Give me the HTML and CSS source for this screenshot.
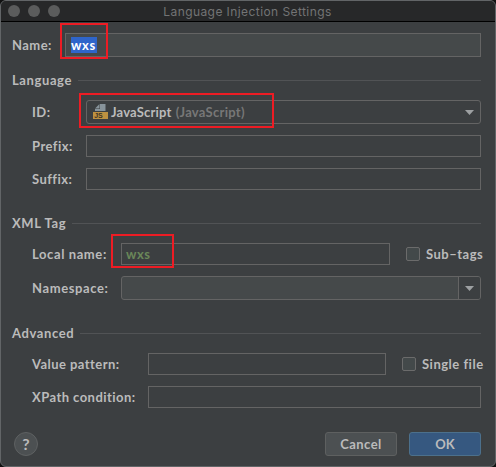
FILE: index.html
```html
<!DOCTYPE html>
<html lang="en">
<head>
<meta charset="utf-8">
<title>Language Injection Settings</title>
<link rel="stylesheet" href="styles.css">
</head>
<body>
<main class="dialog">
  <header class="titlebar">
    <div class="lights"><i></i><i></i><i></i></div>
    <h1>Language Injection Settings</h1>
  </header>
  <form class="content">
    <div class="row row-name">
      <label>Name:</label>
      <div class="field filled"><span class="selected">wxs</span><b class="mark mark-name"></b></div>
    </div>

    <h2><span>Language</span></h2>
    <section class="group language">
      <div class="row">
        <label>ID:</label>
        <div class="field combo">
          <svg class="js-icon" width="16" height="16" viewBox="0 0 16 16">
            <path d="M7 0h5.500v7H2V5h5z"/>
            <path d="M2 4.500 6.500 0v4.500z"/>
            <path d="M0 8h15v7H0z"/>
            <text x="1.2" y="14" class="js-text">JS</text>
          </svg>
          <span class="value">JavaScript</span><span class="hint">(JavaScript)</span>
          <svg class="arrow" width="9" height="5" viewBox="0 0 9 5"><path d="M0 0h9L4.500 5z"/></svg>
          <b class="mark mark-id"></b>
        </div>
      </div>
      <div class="row"><label>Prefix:</label><div class="field"></div></div>
      <div class="row"><label>Suffix:</label><div class="field"></div></div>
    </section>

    <h2><span>XML Tag</span></h2>
    <section class="group xml">
      <div class="row">
        <label class="wide">Local name:</label>
        <div class="field"><span class="green">wxs</span><b class="mark mark-local"></b></div>
        <div class="check subtags"><i></i><span>Sub–tags</span></div>
      </div>
      <div class="row">
        <label class="wide">Namespace:</label>
        <div class="field combo filled">
          <div class="drop"><svg width="9" height="5" viewBox="0 0 9 5"><path d="M0 0h9L4.500 5z"/></svg></div>
        </div>
      </div>
    </section>

    <h2><span>Advanced</span></h2>
    <section class="group advanced">
      <div class="row">
        <label>Value pattern:</label>
        <div class="field"></div>
        <div class="check single"><i></i><span>Single file</span></div>
      </div>
      <div class="row"><label>XPath condition:</label><div class="field"></div></div>
    </section>

    <footer>
      <div class="help">?</div>
      <div class="button">Cancel</div>
      <div class="button primary">OK</div>
    </footer>
  </form>
</main>
</body>
</html>
```
FILE: styles.css
```css
* { box-sizing: border-box; }
body {
  margin: 0;
  background: #111;
  color: #bbb;
  font: 700 13px/16px Lato, "Noto Sans", sans-serif;
}
.dialog {
  width: 496px;
  height: 467px;
  border: 1px solid #626567;
  border-radius: 6px;
  background: #3c3f41;
  overflow: hidden;
}
.titlebar {
  position: relative;
  height: 21px;
  background: #272829;
  border-bottom: 1px solid #000;
}
.lights {
  position: absolute;
  left: 7px;
  top: 4px;
  display: flex;
  gap: 8px;
}
.lights i { width: 12px; height: 12px; border-radius: 50%; background: #5b5c5c; }
h1 {
  margin: 0;
  padding-right: 1px;
  text-align: center;
  font: 400 12px/21px Inter, sans-serif;
  letter-spacing: 0.42px;
  color: #737475;
}
.content { padding: 11px 14px 0 11px; }
.row { display: flex; align-items: center; }
label { flex: none; white-space: nowrap; letter-spacing: 0.45px; }
.wide { letter-spacing: 0.6px; }
.field {
  position: relative;
  flex: 1;
  height: 22px;
  display: flex;
  align-items: center;
  border: 1px solid #646464;
}
.filled { background: #45494a; }
.row-name .field { height: 24px; padding-left: 5px; }
.row-name label { width: 53px; }
.selected { background: #2f65ca; color: #fff; height: 16px; letter-spacing: 0.6px; width: 26px; }
.mark { position: absolute; border: 2px solid #ed1c24; pointer-events: none; }
.mark-name { left: -6px; top: -11px; width: 48px; height: 36px; }
.mark-id { left: -8px; top: -8px; width: 195px; height: 35px; }
.mark-local { left: -11px; top: -10px; width: 63px; height: 34px; }
h2 {
  display: flex;
  align-items: center;
  height: 16px;
  margin: 15px 0 0;
  font: inherit;
  letter-spacing: 0.6px;
}
h2::after { content: ""; flex: 1; height: 1px; margin-left: 6px; background: #515355; }
.group { display: flex; flex-direction: column; gap: 11px; padding: 12px 0 10px 20px; }
.language label { width: 54px; }
.xml label { width: 89px; }
.advanced label { width: 116px; }
.combo { height: 24px; border-radius: 3px; }
.js-icon { margin-left: 6px; }
.js-text { font: 700 7px "Liberation Sans", sans-serif; fill: #3e3524; }
.value { margin-left: 2px; letter-spacing: 0.2px; }
.hint { margin-left: 4px; color: #777; letter-spacing: 0.28px; }
svg path { fill: #9da0a2; }
.js-icon path:nth-child(-n+2) { fill: #87939a; }
.js-icon path:nth-child(3) { fill: #be9140; }
.arrow { margin-left: auto; margin-right: 6px; }
.green { margin-left: 4px; color: #6a8759; letter-spacing: 0.5px; }
.drop {
  margin-left: auto;
  width: 22px;
  height: 22px;
  border-left: 1px solid #646464;
  background: #3c3f41;
  border-radius: 0 2px 2px 0;
  display: grid;
  place-items: center;
}
.check { display: flex; align-items: center; gap: 6px; margin: 0 -4px 0 16px; white-space: nowrap; letter-spacing: 0.5px; }
.check i { width: 14px; height: 14px; border: 1px solid #6b6b6b; border-radius: 2px; background: #43494a; }
.subtags { width: 79px; }
.single { width: 83px; }
footer { display: flex; gap: 12px; margin: 14px 0 0 2px; }
.help {
  width: 24px;
  height: 24px;
  border: 1px solid #5e6162;
  border-radius: 50%;
  background: #4c5052;
  text-align: center;
  font: 700 16px/22px Lato, sans-serif;
  margin-right: auto;
}
.button {
  width: 72px;
  height: 24px;
  border: 1px solid #5e6060;
  border-radius: 3px;
  background: #4c5052;
  text-align: center;
  line-height: 22px;
  letter-spacing: 0.4px;
}
.primary { background: #365880; border-color: #4c708c; letter-spacing: 0; }
```
